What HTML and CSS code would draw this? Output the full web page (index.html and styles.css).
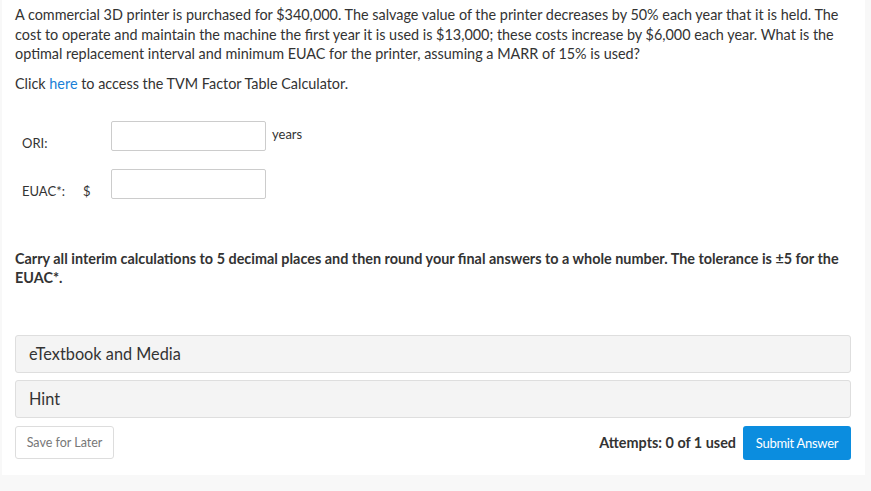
FILE: index.html
```html
<!DOCTYPE html>
<html>
<head>
<meta charset="utf-8">
<link rel="stylesheet" href="styles.css">
</head>
<body>
<div class="panel">
  <p class="question">A commercial 3D printer is purchased for $340,000. The salvage value of the printer decreases by 50% each year that it is held. The cost to operate and maintain the machine the first year it is used is $13,000; these costs increase by $6,000 each year. What is the optimal replacement interval and minimum EUAC for the printer, assuming a MARR of 15% is used?</p>
  <p class="link-line">Click <a class="link" href="#">here</a> to access the TVM Factor Table Calculator.</p>

  <div class="answers">
    <div class="row">
      <span class="label">ORI:</span>
      <span class="prefix"></span>
      <span class="field"></span>
      <span class="unit">years</span>
    </div>
    <div class="row">
      <span class="label">EUAC*:</span>
      <span class="prefix">$</span>
      <span class="field"></span>
    </div>
  </div>

  <p class="note">Carry all interim calculations to 5 decimal places and then round your final answers to a whole number. The tolerance is ±5 for the EUAC*.</p>

  <div class="accordions">
    <div class="acc">eTextbook and Media</div>
    <div class="acc">Hint</div>
  </div>

  <div class="footer">
    <span class="btn save">Save for Later</span>
    <div class="right">
      <span class="attempts">Attempts: 0 of 1 used</span>
      <span class="btn submit">Submit Answer</span>
    </div>
  </div>
</div>
</body>
</html>
```
FILE: styles.css
```css
html, body {
  margin: 0;
  padding: 0;
  background: #f8f8f8;
}
body {
  font-family: Lato, "Open Sans", sans-serif;
  color: #333;
  width: 871px;
  height: 491px;
  overflow: hidden;
}
.panel {
  background: #fff;
  box-sizing: border-box;
  width: 863px;
  height: 475px;
  margin-left: 2px;
  padding: 5px 14px 0 13px;
}
p {
  margin: 0;
}
.question {
  font-size: 14.4px;
  line-height: 19.5px;
}
.link-line {
  font-size: 14.4px;
  line-height: 20px;
  margin-top: 10px;
}
.link {
  color: #1a7fd6;
  text-decoration: none;
}
.answers {
  margin-top: 27px;
  display: flex;
  flex-direction: column;
  gap: 18px;
}
.row {
  display: flex;
  align-items: flex-start;
  font-size: 13px;
}
.label {
  width: 61px;
  padding-left: 7px;
  padding-top: 14px;
}
.prefix {
  width: 28px;
  padding-top: 14px;
}
.field {
  width: 153px;
  height: 28px;
  border: 1px solid #ccc;
  border-radius: 2px;
  box-sizing: content-box;
}
.unit {
  margin-left: 6px;
  padding-top: 5px;
}
.note {
  margin-top: 50px;
  font-size: 14.4px;
  font-weight: bold;
  line-height: 19.5px;
}
.accordions {
  margin-top: 47px;
  display: flex;
  flex-direction: column;
  gap: 7px;
}
.acc {
  background: #f4f4f4;
  border: 1px solid #dedede;
  border-radius: 3px;
  height: 36px;
  padding-left: 13px;
  display: flex;
  align-items: center;
  font-size: 16.3px;
  color: #333;
}
.footer {
  margin-top: 8px;
  display: flex;
  justify-content: space-between;
  align-items: center;
}
.right {
  display: flex;
  align-items: center;
  gap: 7px;
}
.btn {
  display: flex;
  align-items: center;
  justify-content: center;
  height: 33px;
  border-radius: 3px;
  font-size: 12.5px;
  box-sizing: border-box;
}
.save {
  width: 99px;
  border: 1px solid #ddd;
  color: #777;
  background: #fff;
}
.attempts {
  font-size: 14.4px;
  font-weight: bold;
  color: #333;
}
.submit {
  width: 108px;
  height: 34px;
  background: #0b8ddf;
  color: #fff;
  font-size: 13px;
  letter-spacing: -0.3px;
}
```
